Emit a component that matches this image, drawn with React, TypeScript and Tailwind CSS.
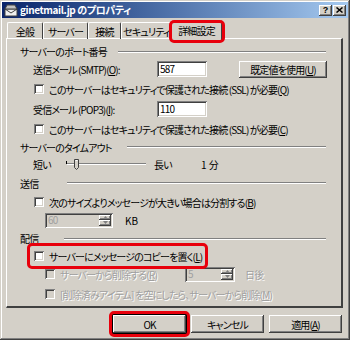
import React from "react";

const font = "font-['Noto_Sans_CJK_JP','Liberation_Sans',sans-serif] [font-feature-settings:'palt']";
const raised =
  "bg-[#d4d0c8] shadow-[inset_-1px_-1px_0_#404040,inset_1px_1px_0_#ffffff,inset_-2px_-2px_0_#808080,inset_2px_2px_0_#d4d0c8]";
const sunken =
  "shadow-[inset_1px_1px_0_#808080,inset_-1px_-1px_0_#ffffff,inset_2px_2px_0_#404040,inset_-2px_-2px_0_#d4d0c8]";

function Check({ label, disabled }: { label: React.ReactNode; disabled?: boolean }) {
  return (
    <div className="flex items-center gap-[5px]">
      <span className={`w-[10px] h-[10px] shrink-0 ${sunken} ${disabled ? "bg-[#d4d0c8]" : "bg-white"}`} />
      <span className={disabled ? "text-[#a0a0a0] [text-shadow:1px_1px_0_#ffffff]" : "text-black"}>{label}</span>
    </div>
  );
}

function Group({ label, w }: { label: string; w: string }) {
  return (
    <div className="flex items-center h-full">
      <span className={`${w} shrink-0`}>{label}</span>
      <div className="flex-1 mr-[15px] h-[2px] border-t border-[#808080] border-b border-b-white" />
    </div>
  );
}

function Spin({ value, w }: { value: string; w: string }) {
  return (
    <div className={`${w} h-[15px] ${sunken} bg-[#d4d0c8] flex items-center pl-[3px] pr-[2px]`}>
      <span className="flex-1 text-[#a0a0a0] leading-none">{value}</span>
      <div className="flex flex-col w-[12px] h-[11px]">
        <div className={`flex-1 ${raised} flex items-center justify-center`}>
          <svg width="5" height="3" viewBox="0 0 5 3"><path d="M2.5 0L5 3H0z" fill="#808080" /></svg>
        </div>
        <div className={`flex-1 ${raised} flex items-center justify-center`}>
          <svg width="5" height="3" viewBox="0 0 5 3"><path d="M0 0h5L2.5 3z" fill="#808080" /></svg>
        </div>
      </div>
    </div>
  );
}

function Field({ value }: { value: string }) {
  return (
    <div className={`w-[50px] h-[16px] bg-white ${sunken} flex items-center pl-[3px] leading-none`}>{value}</div>
  );
}

const tabs = [
  { label: "全般", w: "w-[36px]" },
  { label: "サーバー", w: "w-[45px]" },
  { label: "接続", w: "w-[33px]" },
  { label: "セキュリティ", w: "w-[51px]" },
];

export default function App() {
  return (
    <div
      className={`${font} text-[10px] tracking-[-0.85px] whitespace-nowrap text-black w-[350px] h-[340px] bg-[#d4d0c8] overflow-hidden p-[2px] shadow-[inset_-1px_-1px_0_#404040,inset_1px_1px_0_#d4d0c8,inset_-2px_-2px_0_#808080,inset_2px_2px_0_#ffffff] flex flex-col`}
    >
      {/* title bar */}
      <div className="h-[16px] shrink-0 bg-gradient-to-r from-[#0a246a] to-[#a6caf0] flex items-center pl-[2px] pr-[2px]">
        <svg width="14" height="13" viewBox="0 0 14 13" className="mr-[2px]">
          <rect x="1" y="5" width="12" height="7" fill="#f0f0f0" stroke="#404040" strokeWidth="1" />
          <path d="M1 5l6 4 6-4" fill="none" stroke="#404040" strokeWidth="1" />
          <path d="M3 1h8l2 4H1z" fill="#c0c0c0" stroke="#404040" strokeWidth="1" />
        </svg>
        <span className="text-white font-bold text-[10px] tracking-[-0.4px] leading-none flex-1">ginetmail.jp のプロパティ</span>
        <div className={`w-[13px] h-[11px] ${raised} flex items-center justify-center text-[9px] font-bold leading-none tracking-normal font-['Liberation_Sans',sans-serif]`}>?</div>
        <div className={`w-[13px] h-[11px] ml-[1px] ${raised} flex items-center justify-center`}>
          <svg width="7" height="6" viewBox="0 0 7 6"><path d="M0.5 0.5l6 5M6.5 0.5l-6 5" stroke="#000" strokeWidth="1.5" /></svg>
        </div>
      </div>

      {/* tabs */}
      <div className="h-[20px] shrink-0 flex items-end pl-[5px] relative">
        {tabs.map((t) => (
          <div
            key={t.label}
            className={`${t.w} h-[17px] flex items-center justify-center border-t border-l border-white border-r border-r-[#404040] rounded-t-[2px] mb-[-1px]`}
          >
            {t.label}
          </div>
        ))}
        <div className="relative w-[51px] h-[20px] flex items-center justify-center bg-[#d4d0c8] border-t border-l border-white border-r border-r-[#404040] rounded-t-[2px] z-10 mb-[-2px] -ml-[1px]">
          詳細設定
          <span className="absolute -left-[3px] -top-[1px] w-[56px] h-[23px] border-[3px] border-[#e8000c] rounded-[5px]" />
        </div>
      </div>

      {/* panel */}
      <div className="mx-[4px] mr-[5px] h-[270px] shrink-0 border-t border-l border-white border-r-2 border-b-2 border-r-[#404040] border-b-[#404040] pl-[13px] pt-[5px] flex flex-col">
        <div className="h-[15px]"><Group label="サーバーのポート番号" w="w-[98px]" /></div>
        <div className="h-[20px] flex items-center pl-[13px]">
          <span className="w-[124px]">送信メール (SMTP)(<u>O</u>):</span>
          <Field value="587" />
          <div className={`ml-[32px] w-[88px] h-[17px] ${raised} flex items-center justify-center`}>既定値を使用(<u>U</u>)</div>
        </div>
        <div className="h-[20px] flex items-center pl-[14px]">
          <Check label={<>このサーバーはセキュリティで保護された接続 (SSL) が必要(<u>Q</u>)</>} />
        </div>
        <div className="h-[20px] flex items-center pl-[13px]">
          <span className="w-[124px]">受信メール (POP3)(<u>I</u>):</span>
          <Field value="110" />
        </div>
        <div className="h-[20px] flex items-center pl-[14px]">
          <Check label={<>このサーバーはセキュリティで保護された接続 (SSL) が必要(<u>C</u>)</>} />
        </div>
        <div className="h-[16px]"><Group label="サーバーのタイムアウト" w="w-[107px]" /></div>
        <div className="h-[18px] flex items-center pl-[13px]">
          <span className="w-[33px]">短い</span>
          <svg width="82" height="14" viewBox="0 0 82 14" className="shrink-0">
            <line x1="1" y1="6.5" x2="80" y2="6.5" stroke="#808080" />
            <line x1="1" y1="7.5" x2="80" y2="7.5" stroke="#ffffff" />
            <line x1="0.5" y1="4" x2="0.5" y2="7" stroke="#000" />
            <path d="M8.5 2.5h4v8l-2 2-2-2z" fill="#d4d0c8" stroke="#404040" />
            <path d="M9.5 3.5h2" stroke="#ffffff" />
          </svg>
          <span className="ml-[6px] w-[47px]">長い</span>
          <span className="tracking-normal">1 分</span>
        </div>
        <div className="h-[20px]"><Group label="送信" w="w-[47px]" /></div>
        <div className="h-[18px] flex items-center pl-[14px]">
          <Check label={<>次のサイズよりメッセージが大きい場合は分割する(<u>B</u>)</>} />
        </div>
        <div className="h-[18px] flex items-center pl-[25px]">
          <Spin value="60" w="w-[68px]" />
          <span className="ml-[12px] tracking-normal">KB</span>
        </div>
        <div className="h-[19px]"><Group label="配信" w="w-[44px]" /></div>
        <div className="h-[16px] flex items-center pl-[14px]">
          <div className="relative">
            <Check label={<>サーバーにメッセージのコピーを置く(<u>L</u>)</>} />
            <span className="absolute -left-[7px] -right-[6px] -top-[6px] -bottom-[5px] border-[3px] border-[#e8000c] rounded-[5px]" />
          </div>
        </div>
        <div className="h-[20px] flex items-center pl-[25px]">
          <div className="w-[140px]">
            <Check disabled label={<>サーバーから削除する(<u>R</u>)</>} />
          </div>
          <Spin value="5" w="w-[50px]" />
          <span className="ml-[10px] text-[#a0a0a0] [text-shadow:1px_1px_0_#ffffff]">日後</span>
        </div>
        <div className="h-[20px] flex items-center pl-[25px]">
          <Check disabled label={<>[削除済みアイテム] を空にしたら、サーバーから削除(<u>M</u>)</>} />
        </div>
      </div>

      {/* buttons */}
      <div className="flex justify-end gap-[5px] pr-[6px] mt-[7px]">
        <div className="relative">
          <div className={`w-[73px] h-[18px] ${raised} flex items-center justify-center outline outline-1 outline-black`}>OK</div>
          <span className="absolute -left-[4px] -top-[4px] w-[81px] h-[26px] border-[3px] border-[#e8000c] rounded-[5px]" />
        </div>
        <div className={`w-[73px] h-[18px] ${raised} flex items-center justify-center`}>キャンセル</div>
        <div className={`w-[73px] h-[18px] ${raised} flex items-center justify-center`}>適用(<u>A</u>)</div>
      </div>
    </div>
  );
}
